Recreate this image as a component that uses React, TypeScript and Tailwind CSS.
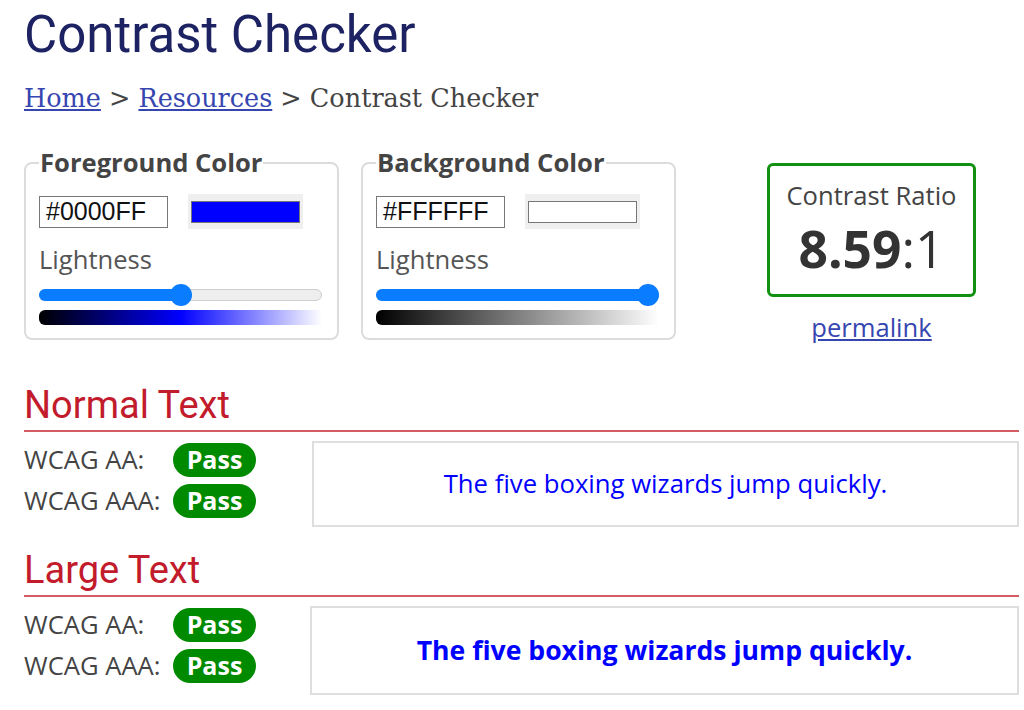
import type { ReactNode } from "react";

const sans = "font-['Open_Sans',sans-serif]";

function Slider({ pct }: { pct: number }) {
  return (
    <div className="relative h-[22px] w-full">
      <div className="absolute left-0 right-0 top-[5px] h-[12px] rounded-full border border-[#cfcfcf] bg-[#eee]" />
      <div
        className="absolute left-0 top-[5px] h-[12px] rounded-full bg-[#0a7cff]"
        style={{ width: `calc(${pct} * (100% - 22px) + 11px)` }}
      />
      <div
        className="absolute top-0 h-[22px] w-[22px] rounded-full bg-[#0a7cff]"
        style={{ left: `calc(${pct} * (100% - 22px))` }}
      />
    </div>
  );
}

function ColorBox({
  legend,
  hex,
  swatch,
  pct,
  gradient,
}: {
  legend: string;
  hex: string;
  swatch: string;
  pct: number;
  gradient: string;
}) {
  return (
    <fieldset className="w-[315px] rounded-lg border-2 border-[#dcdcdc] pb-[13px] pl-[13px] pr-[15px]">
      <legend className={`${sans} px-[1px] text-[25.6px] font-bold leading-[32px] text-[#444]`}>{legend}</legend>
      <div className="mt-[15px] flex items-center gap-[20px]">
        <div className="flex h-[32px] w-[129px] items-center border border-[#777] pl-[6px] font-['Liberation_Sans',sans-serif] text-[25px] text-[#111]">
          {hex}
        </div>
        <div className="flex h-[35px] w-[115px] items-center bg-[#efefef] px-[3px]">
          <div className={`h-[22px] w-full border border-[#777] ${swatch}`} />
        </div>
      </div>
      <div className={`${sans} mt-[15px] text-[25.6px] leading-[32px] text-[#555]`}>Lightness</div>
      <div className="mt-[8px]">
        <Slider pct={pct} />
      </div>
      <div className={`mt-[4px] h-[15px] w-full rounded-l-md ${gradient}`} />
    </fieldset>
  );
}

function Badge() {
  return (
    <span className={`${sans} flex h-[34px] w-[83px] items-center justify-center rounded-full bg-[#008a00] text-[25px] font-bold text-white`}>
      Pass
    </span>
  );
}

function Results({ title, leftW, boxH, children }: { title: string; leftW: string; boxH: string; children: ReactNode }) {
  return (
    <section>
      <h2 className="border-b-2 border-[#d65c64] pb-[3px] font-['Roboto',sans-serif] text-[38px] leading-[44px] text-[#c21b2b]">
        {title}
      </h2>
      <div className="mt-[9px] flex">
        <div className={`${leftW} flex flex-col gap-[7px] pt-[2px]`}>
          {["WCAG AA:", "WCAG AAA:"].map((l) => (
            <div key={l} className="flex h-[34px] items-center">
              <span className={`${sans} w-[149px] text-[25.6px] leading-[34px] text-[#444]`}>{l}</span>
              <Badge />
            </div>
          ))}
        </div>
        <div className={`flex ${boxH} flex-1 items-center justify-center border-2 border-[#dedede]`}>{children}</div>
      </div>
    </section>
  );
}

export default function App() {
  return (
    <div className="min-h-[710px] w-[1024px] bg-white pl-[24px] pr-[5px] pt-[5px]">
      <h1 className="font-['Roboto',sans-serif] text-[51px] leading-[60px] text-[#1d2362]">Contrast Checker</h1>
      <nav className="mt-[17px] font-['DejaVu_Serif',serif] text-[25.5px] leading-[32px] text-[#444]">
        <a className="text-[#3646b0] underline">Home</a> &gt; <a className="text-[#3646b0] underline">Resources</a> &gt;
        Contrast Checker
      </nav>

      <div className="mt-[33px] flex items-start">
        <ColorBox
          legend="Foreground Color"
          hex="#0000FF"
          swatch="bg-[#0000ff]"
          pct={0.5}
          gradient="bg-[linear-gradient(to_right,#000,#0000ff_50%,#fff)]"
        />
        <div className="ml-[22px]">
          <ColorBox
            legend="Background Color"
            hex="#FFFFFF"
            swatch="bg-white"
            pct={1}
            gradient="bg-[linear-gradient(to_right,#000,#fff)]"
          />
        </div>
        <div className="ml-[91px] mt-[16px] flex flex-col items-center">
          <div className={`${sans} flex h-[134px] w-[209px] flex-col items-center rounded-md border-[3px] border-[#119011] pt-[14px] text-[#333]`}>
            <div className="text-[25.6px] leading-[32px] text-[#444]">Contrast Ratio</div>
            <div className="mt-[6px] text-[51.5px] leading-[60px]">
              <span className="font-bold">8.59</span>:1
            </div>
          </div>
          <a className={`${sans} mt-[15px] text-[25.6px] leading-[32px] text-[#3646b0] underline`}>permalink</a>
        </div>
      </div>

      <div className="mt-[39px]">
        <Results title="Normal Text" leftW="w-[288px]" boxH="h-[86px]">
          <p className={`${sans} text-[25.7px] text-[#0000ff]`}>The five boxing wizards jump quickly.</p>
        </Results>
      </div>
      <div className="mt-[21px]">
        <Results title="Large Text" leftW="w-[286px]" boxH="h-[89px]">
          <p className={`${sans} text-[26.6px] font-bold text-[#0000ff]`}>The five boxing wizards jump quickly.</p>
        </Results>
      </div>
    </div>
  );
}
